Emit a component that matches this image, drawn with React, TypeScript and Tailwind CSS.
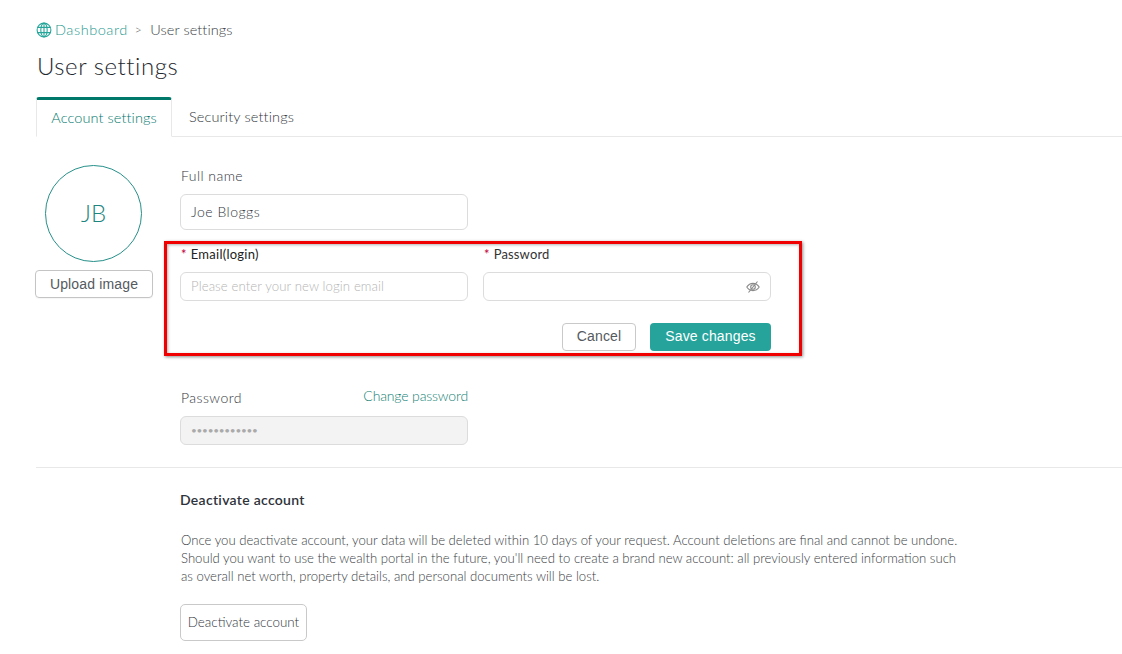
function GlobeIcon() {
  return (
    <svg width="16" height="16" viewBox="0 0 16 16" fill="none" stroke="#26a69a" strokeWidth="1.1" className="shrink-0">
      <circle cx="8" cy="8" r="6.9" />
      <ellipse cx="8" cy="8" rx="3.2" ry="6.9" />
      <path d="M1.6 5.4h12.8M1.6 10.6h12.8M8 1v14" />
    </svg>
  );
}

function EyeSlash() {
  return (
    <svg width="14" height="14" viewBox="0 0 14 14" fill="none" stroke="#8a8a8a" strokeWidth="1.1">
      <path d="M0.8 7C2.4 4.6 4.5 3.4 7 3.4S11.6 4.6 13.2 7C11.6 9.4 9.5 10.6 7 10.6S2.4 9.4 0.8 7Z" />
      <circle cx="7" cy="7" r="2.3" />
      <path d="M11.5 1.5L2.5 12.5" />
    </svg>
  );
}

export default function App() {
  return (
    <div className="relative h-[654px] w-[1122px] overflow-hidden bg-white font-['Lato',sans-serif] font-light text-[#32363c]">
      <div className="pl-9 pt-[21px]">
        <nav className="flex h-[18px] items-center text-[14.5px] tracking-[0.55px]">
          <GlobeIcon />
          <span className="ml-[3px] text-[#1f9a90]">Dashboard</span>
          <span className="ml-[7px] text-[12px] text-[#666]">&gt;</span>
          <span className="ml-[8px] text-[14.5px] tracking-[0.1px] text-[#3a3e44]">User settings</span>
        </nav>
        <h1 className="mt-[11px] h-[32px] pl-px text-[24px] leading-[32px] font-light tracking-[0.55px] text-[#23272e]">User settings</h1>
        <div className="mt-[15px] flex h-[40px] border-b border-[#e8e8e8]">
          <div className="-mb-px flex h-[40px] w-[136px] items-center justify-center rounded-t-[3px] border-x border-b border-t-[3px] border-x-[#e8e8e8] border-b-white border-t-[#00796b] bg-white text-[14.5px] tracking-[0.1px] text-[#047a6e]">
            Account settings
          </div>
          <div className="flex w-[139px] items-center justify-center text-[14.5px] tracking-[0.15px] text-[#32363c]">Security settings</div>
        </div>
        <div className="flex pt-[28px]">
          <div className="flex w-[144px] shrink-0 flex-col">
            <div className="ml-[9px] flex h-[97px] w-[97px] items-center justify-center rounded-full border border-[#26908a] pb-[2px] text-[24px] font-light text-[#1f857e]">JB</div>
            <button className="mt-2 -ml-px h-[28px] w-[118px] rounded-[4px] border border-[#c4c4c4] font-['Liberation_Sans',sans-serif] text-[14px] font-normal tracking-[0.15px] text-[#555a60] shadow-[0_1px_1px_rgba(0,0,0,0.04)]">Upload image</button>
          </div>
          <div className="flex-1 pt-[2px]">
            <div className="mb-[9px] pl-px text-[14px] leading-[18px] tracking-[0.45px]">Full name</div>
            <div className="flex h-[36px] w-[288px] items-center rounded-[6px] border border-[#dcdcdc] pb-[2px] pl-[10px] text-[14px] tracking-[0.5px]">Joe Bloggs</div>
            <div className="mt-[16px] flex gap-[15px]">
              <div className="w-[288px]">
                <div className="mb-[8px] flex h-[18px] items-center pl-px text-[13px] font-normal tracking-[0.25px] text-[#222]"><span className="mr-[4px] text-[#c2003a]">*</span>Email(login)</div>
                <div className="flex h-[29px] items-center rounded-[6px] border border-[#dcdcdc] pl-[10px] text-[13.2px] tracking-[0.1px] text-[#b5b5b5]">Please enter your new login email</div>
              </div>
              <div className="w-[288px]">
                <div className="mb-[8px] flex h-[18px] items-center pl-px text-[13px] font-normal tracking-[0.15px] text-[#333]"><span className="mr-[4px] text-[#c2003a]">*</span>Password</div>
                <div className="flex h-[29px] items-center justify-end rounded-[6px] border border-[#dcdcdc] pr-[10px]"><EyeSlash /></div>
              </div>
            </div>
            <div className="mt-[22px] flex w-[591px] justify-end gap-[14px] font-['Liberation_Sans',sans-serif] text-[14px] font-normal tracking-[0.15px]">
              <button className="h-[28px] w-[74px] rounded-[4px] border border-[#c9c9c9] pb-px text-[#555a60]">Cancel</button>
              <button className="h-[28px] w-[121px] rounded-[4px] bg-[#26a49b] pb-px text-white">Save changes</button>
            </div>
            <div className="mt-[36px] flex h-[20px] w-[288px] items-start justify-between">
              <span className="pt-[2px] pl-px text-[14px] leading-[18px] tracking-[0.45px]">Password</span>
              <span className="text-[14px] leading-[18px] tracking-[-0.15px] text-[#137f75]">Change password</span>
            </div>
            <div className="mt-[9px] flex h-[29px] w-[288px] items-center rounded-[6px] border border-[#dcdcdc] bg-[#f3f3f3] pl-[10px] text-[10px] font-normal tracking-[-0.25px] text-[#aaa]">••••••••••••</div>
          </div>
        </div>
        <div className="mt-[22px] border-t border-[#e8e8e8] pl-[144px]">
          <h2 className="mt-[23px] text-[14px] leading-[18px] font-semibold tracking-[0.3px] text-[#2e323a]">Deactivate account</h2>
          <p className="mt-[22px] w-[800px] pl-px text-[13.15px] leading-[18px] whitespace-nowrap text-[#3a3e44]">
            Once you deactivate account, your data will be deleted within 10 days of your request. Account deletions are final and cannot be undone.
            <br />Should you want to use the wealth portal in the future, you'll need to create a brand new account: all previously entered information such
            <br />as overall net worth, property details, and personal documents will be lost.
          </p>
          <button className="mt-[19px] h-[37px] w-[127px] rounded-[5px] border border-[#c9c9c9] pb-px text-[13.4px] text-[#32363c]">Deactivate account</button>
        </div>
      </div>
      <div className="pointer-events-none absolute left-[164px] top-[241px] h-[115px] w-[638px] border-[3px] border-[#f00000] shadow-[1px_1px_3px_rgba(0,0,0,0.45),inset_1px_1px_3px_rgba(0,0,0,0.3)]" />
    </div>
  );
}
